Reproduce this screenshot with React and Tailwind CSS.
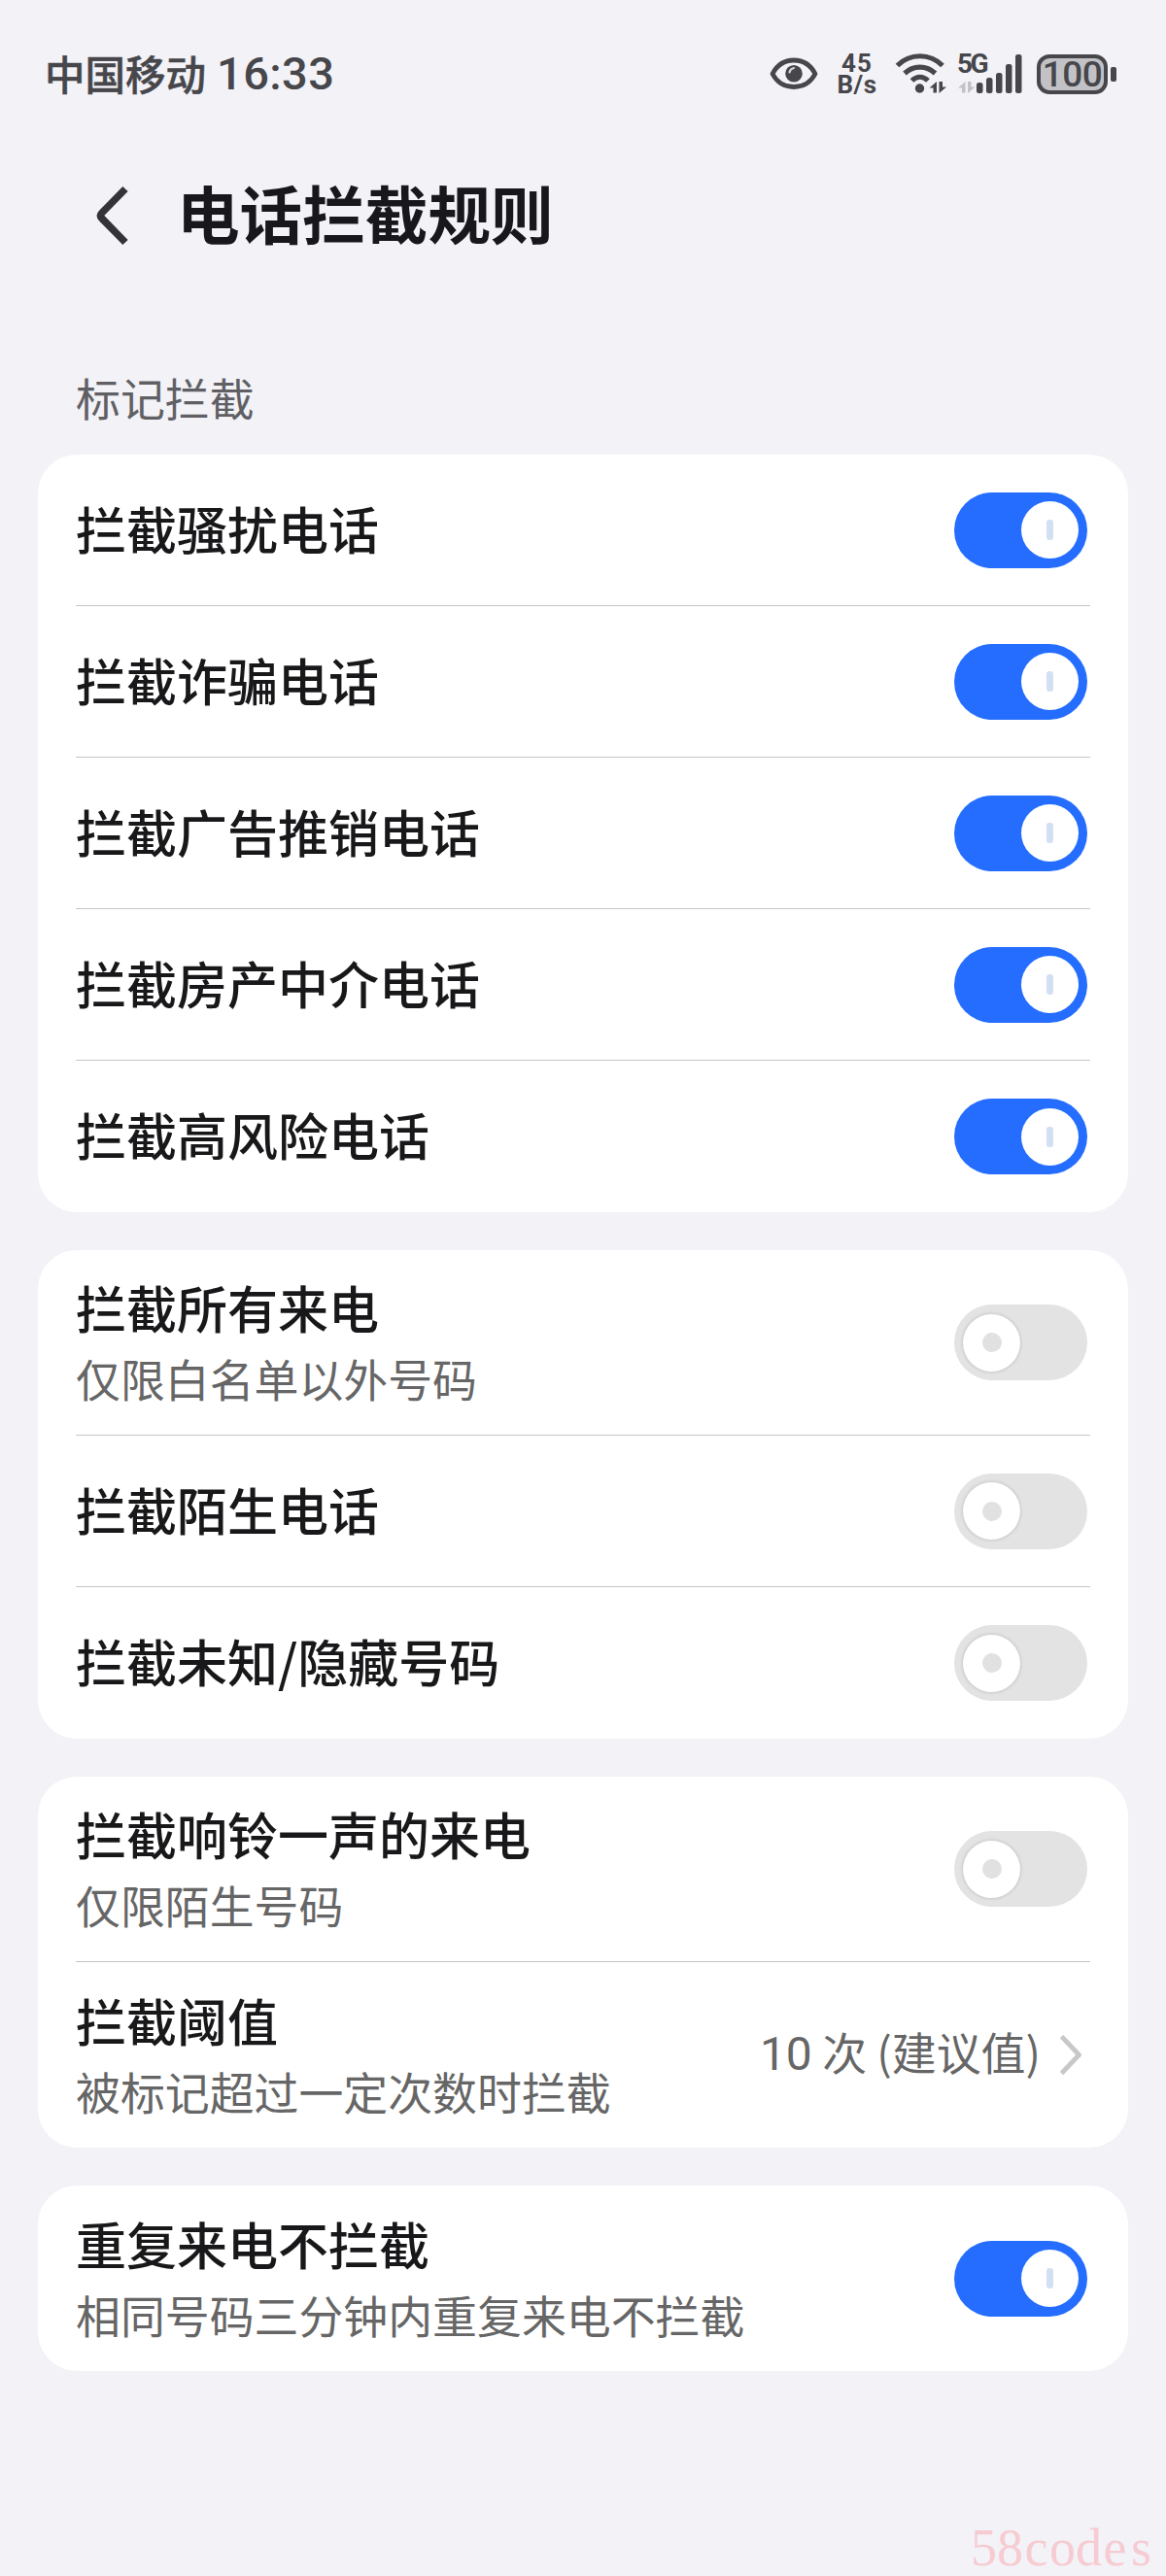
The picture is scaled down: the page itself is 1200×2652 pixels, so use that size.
import React, { useState } from 'react';

function EyeIcon() {
  return (
    <svg className="block shrink-0" width="50" height="34" viewBox="0 0 50 34" fill="none">
      <path d="M3 17C8 7.500 16 3 25 3s17 4.500 22 14c-5 9.500-13 13.500-22 13.500S8 26.500 3 17Z" stroke="#46464b" strokeWidth="4.800" strokeLinejoin="round" />
      <circle cx="25" cy="16.800" r="8.800" fill="#46464b" />
      <path d="M20.500 15.500c.5-2.500 2-4 4.500-4.500" stroke="#d0d0d5" strokeWidth="2.200" strokeLinecap="round" />
    </svg>
  );
}

function WifiIcon() {
  return (
    <svg className="block shrink-0" width="54" height="42" viewBox="0 0 54 42" fill="none">
      <g stroke="#46464b" strokeWidth="5.200">
        <path d="M2.500 12.500C15.500-.5 36-.5 49 12.500" />
        <path d="M10 20.500c9-8.500 22.500-8.500 31.500 0" />
        <path d="M17.500 28c5-5 11.500-5 16.500 0" />
      </g>
      <circle cx="25.500" cy="36" r="4.700" fill="#46464b" />
      <path d="M43 40.500h-3.500V35.500H35.500L43 29ZM45.500 29H49v5.500h4L45.500 41Z" fill="#46464b" />
    </svg>
  );
}

function SignalIcon() {
  return (
    <div className="relative h-[42px] w-[68px] shrink-0">
      <span className="absolute -top-[3px] left-0 font-[Roboto] text-[28px] leading-[28px] font-bold tracking-[-2.500px]">5G</span>
      <svg className="block" width="68" height="42" viewBox="0 0 68 42" fill="none">
        <path d="M8.500 40.500H5V35.500H1L8.500 29ZM11 29h3.500v5.500h4L11 41Z" fill="#c2c2c6" />
        <g fill="#46464b">
          <rect x="20" y="30" width="6.500" height="11" rx="2.500" />
          <rect x="30" y="25" width="6.500" height="16" rx="2.500" />
          <rect x="40" y="20" width="6.500" height="21" rx="2.500" />
          <rect x="50" y="11" width="6.500" height="30" rx="2.500" />
          <rect x="60" y="1" width="6.500" height="40" rx="2.500" />
        </g>
      </svg>
    </div>
  );
}

function StatusBar() {
  return (
    <header className="flex h-[152px] items-center pl-[46px] text-[#46464b]">
      <span className="pb-[3px] font-['Noto_Sans_CJK_SC',sans-serif] text-[41.500px] leading-[60px] font-medium [-webkit-text-stroke:0.5px_#46464b]">中国移动</span>
      <span className="ml-[11px] font-[Roboto,sans-serif] text-[47px] leading-[60px] font-medium tracking-[0.400px]">16:33</span>
      <div className="ml-auto flex items-center pr-[51px]">
        <EyeIcon />
        <div className="ml-[15px] w-[50px] text-center font-[Roboto,sans-serif] text-[26px] leading-[22px] font-bold">
          <div className="tracking-[1px]">45</div>
          <div className="tracking-[0.500px]">B/s</div>
        </div>
        <div className="ml-[14px]"><WifiIcon /></div>
        <div className="ml-[10px]"><SignalIcon /></div>
        <div className="ml-[14px] flex h-[41px] w-[73px] items-center justify-center rounded-[13px] border-4 border-[#46464b] bg-[#c2c2c6] font-[Roboto,sans-serif] text-[37px] leading-[36px] font-medium tracking-[-0.500px]"><span className="pt-[1px]">100</span></div>
        <div className="ml-[3px] h-[15px] w-[6px] rounded-[2px] bg-[#46464b]" />
      </div>
    </header>
  );
}

function Toggle({ initial, label }) {
  const [on, setOn] = useState(initial);
  return (
    <button
      type="button"
      role="switch"
      aria-checked={on}
      aria-label={label}
      onClick={() => setOn(!on)}
      className={
        'mr-[3px] flex h-[78px] w-[137px] shrink-0 items-center rounded-full px-[9px] ' +
        (on ? 'justify-end bg-[#246dff]' : 'justify-start bg-[#e3e3e3]')
      }
    >
      <span className={'flex size-[59px] items-center justify-center rounded-full bg-white ' + (on ? '' : 'shadow-[0_0_3px_1px_rgba(0,0,0,0.12)]')}>
        <span className={on ? 'h-[21px] w-[7px] rounded-[3px] bg-[#d3e0f3]' : 'size-[20px] rounded-full bg-[#e1e1e1]'} />
      </span>
    </button>
  );
}

function Row({ title, sub, on, count, value }) {
  return (
    <div className={'flex items-center border-[#c6c6c8] not-last:border-b ' + (sub ? 'h-[191px]' : 'h-[156px]')}>
      <div className={'flex-1 ' + (sub ? '' : 'pb-[5px]')}>
        <div className="text-[52px] leading-[73px] font-medium text-[#18181a]">{title}</div>
        {sub && <div className="text-[45.900px] leading-[73px] text-[#666666]">{sub}</div>}
      </div>
      {value ? (
        <div className="mr-[9px] flex items-center text-[#666666]">
          <span className="pb-[6px] text-[45.900px] leading-[60px]">
            <span className="font-[Roboto,sans-serif] text-[48px]">{count}</span> {value}
          </span>
          <svg className="ml-[20px]" width="22" height="42" viewBox="0 0 22 42" fill="none">
            <path d="M1.500 1.500 19.500 20.500 1.500 39.500" stroke="#c8c8c8" strokeWidth="4.800" strokeLinejoin="round" />
          </svg>
        </div>
      ) : (
        <Toggle initial={!!on} label={title} />
      )}
    </div>
  );
}

function Card({ rows }) {
  return (
    <section className="rounded-[40px] bg-white px-[39px]">
      {rows.map((row) => <Row key={row.title} {...row} />)}
    </section>
  );
}

const groups = [
  [
    { title: '拦截骚扰电话', on: true },
    { title: '拦截诈骗电话', on: true },
    { title: '拦截广告推销电话', on: true },
    { title: '拦截房产中介电话', on: true },
    { title: '拦截高风险电话', on: true },
  ],
  [
    { title: '拦截所有来电', sub: '仅限白名单以外号码' },
    { title: '拦截陌生电话' },
    { title: '拦截未知/隐藏号码' },
  ],
  [
    { title: '拦截响铃一声的来电', sub: '仅限陌生号码' },
    { title: '拦截阈值', sub: '被标记超过一定次数时拦截', count: '10', value: '次 (建议值)' },
  ],
  [{ title: '重复来电不拦截', sub: '相同号码三分钟内重复来电不拦截', on: true }],
];

export default function App() {
  return (
    <div className="flex h-[2652px] w-[1200px] flex-col overflow-hidden bg-[#f2f2f7] font-['Noto_Sans_CJK_SC',sans-serif]">
      <StatusBar />
      <div className="flex h-[140px] items-center pl-[98px]">
        <svg width="34" height="64" viewBox="0 0 34 64" fill="none">
          <path d="M31 4.500 7 29Q4 32 7 35L31 59.500" stroke="#333338" strokeWidth="7.500" />
        </svg>
        <h1 className="ml-[50px] pb-[9px] text-[64.600px] leading-[90px] font-bold text-[#18181c]">电话拦截规则</h1>
      </div>
      <h2 className="mt-[84px] h-[92px] pl-[78px] text-[45.900px] leading-[64px] text-[#606064]">标记拦截</h2>
      <main className="flex flex-col gap-[39px] px-[39px]">
        {groups.map((rows) => <Card key={rows[0].title} rows={rows} />)}
      </main>
      <footer className="mt-auto mr-[12px] mb-[1px] flex justify-end font-['Liberation_Serif',serif] text-[54px] leading-[56px] text-[#f6ccd2]">
        {'58codes'.split('').map((c, i) => (
          <span key={i} className="w-[27px] text-center">{c}</span>
        ))}
      </footer>
    </div>
  );
}
